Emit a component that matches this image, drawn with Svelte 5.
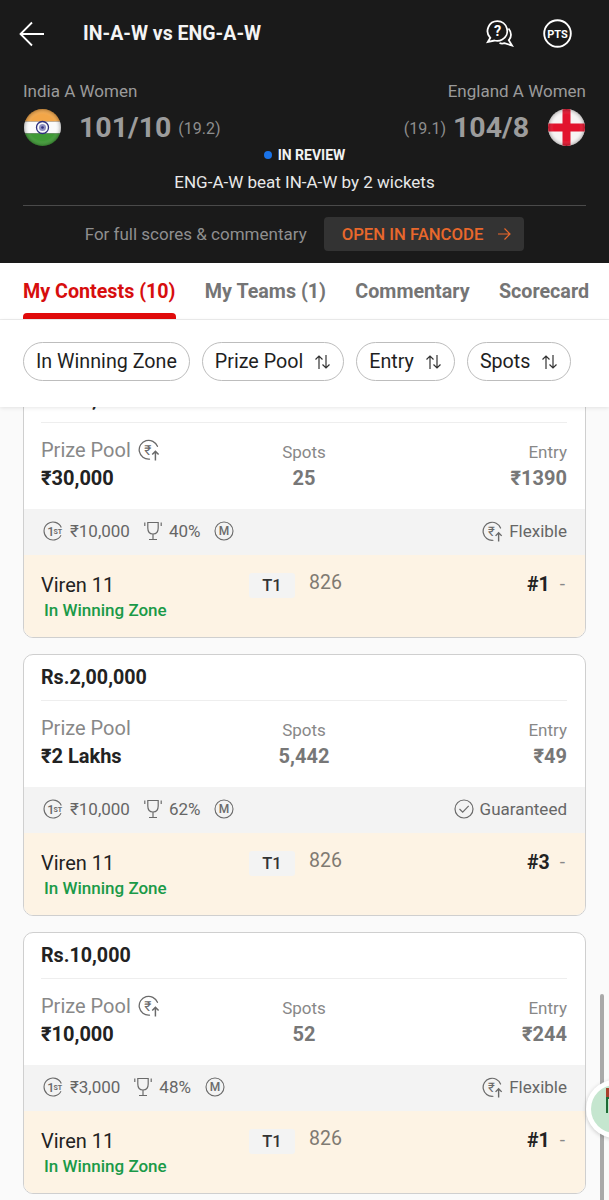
<script>
  const contests = [
    { title: 'Rs.30,000', pool: '₹30,000', flexible: true, spots: '25', entry: '₹1390', first: '₹10,000', win: '40%', type: 'Flexible', rank: '#1' },
    { title: 'Rs.2,00,000', pool: '₹2 Lakhs', flexible: false, spots: '5,442', entry: '₹49', first: '₹10,000', win: '62%', type: 'Guaranteed', rank: '#3' },
    { title: 'Rs.10,000', pool: '₹10,000', flexible: true, spots: '52', entry: '₹244', first: '₹3,000', win: '48%', type: 'Flexible', rank: '#1' }
  ];
  const filters = [
    { label: 'In Winning Zone', sort: false },
    { label: 'Prize Pool', sort: true },
    { label: 'Entry', sort: true },
    { label: 'Spots', sort: true }
  ];
</script>

{#snippet flexIcon(size)}
  <svg class="ico" width={size} height={size} viewBox="0 0 24 24" fill="none" stroke="#6a6a6a" stroke-width="1.400">
    <path d="M21.200 8A10.300 10.300 0 1 0 12.500 22" stroke-linecap="round" />
    <text x="10.800" y="17" text-anchor="middle" class="flex-rupee">₹</text>
    <path d="M19 23.500V13.500M15.500 17 19 13.500l3.500 3.500" stroke-width="1.600" />
  </svg>
{/snippet}

{#snippet sortIcon()}
  <svg class="sort" width="17" height="16" viewBox="0 0 17 16" fill="none" stroke="#333" stroke-width="1.200">
    <path d="M5 15V2M1.500 5.500 5 2l3.500 3.500M12 1v13M8.500 10.500 12 14l3.500-3.500" />
  </svg>
{/snippet}

<div class="screen">
  <header class="match">
    <div class="topbar">
      <svg class="back" width="26" height="26" viewBox="0 0 26 26" fill="none" stroke="#fff" stroke-width="1.800">
        <path d="M25 13H2M13 1.500 1.500 13 13 24.500" />
      </svg>
      <h1>IN-A-W vs ENG-A-W</h1>
      <svg class="help" width="28" height="27" viewBox="0 0 28 27" fill="none" stroke="#fff" stroke-width="1.800">
        <path d="M11.500 1.200a9.800 9.800 0 0 1 4.800 18.300c-2.300 1.300-5.200 1.700-7.800 1L1.800 22l2.500-4.200A9.800 9.800 0 0 1 11.500 1.200Z" />
        <path d="M22.500 8.500c3.300 3.800 3.200 8.700.3 11.700l3.200 5.300-7.500-2.300c-2 .6-3.500.5-5-.2" />
        <text x="11.500" y="16" text-anchor="middle" class="help-q">?</text>
      </svg>
      <svg class="pts" width="29" height="29" viewBox="0 0 29 29" fill="none">
        <circle cx="14.500" cy="14.500" r="13.300" stroke="#fff" stroke-width="1.900" />
        <text x="14.500" y="18.500" text-anchor="middle" class="pts-text">PTS</text>
      </svg>
    </div>

    <div class="names">
      <span>India A Women</span>
      <span>England A Women</span>
    </div>

    <div class="scores">
      <svg class="flag" width="37" height="37" viewBox="0 0 37 37">
        <defs>
          <clipPath id="ball"><circle cx="18.500" cy="18.500" r="18.500" /></clipPath>
          <radialGradient id="gloss" cx="50%" cy="50%" r="50%">
            <stop offset="70%" stop-color="#fff" stop-opacity="0" />
            <stop offset="100%" stop-color="#000" stop-opacity="0.250" />
          </radialGradient>
        </defs>
        <g clip-path="url(#ball)">
          <rect width="37" height="12.500" fill="#f2a648" />
          <rect y="12.500" width="37" height="12" fill="#fafafa" />
          <rect y="24.500" width="37" height="12.500" fill="#3f9a36" />
          <circle cx="18.500" cy="18.500" r="6" fill="none" stroke="#2f2f7c" stroke-width="1.300" />
          <circle cx="18.500" cy="18.500" r="3.500" fill="#8f8fc0" />
          <circle cx="18.500" cy="18.500" r="1.300" fill="#2f2f7c" />
          <circle cx="18.500" cy="18.500" r="18.500" fill="url(#gloss)" />
        </g>
      </svg>
      <strong class="runs home">101/10</strong>
      <span class="overs">(19.2)</span>
      <span class="spacer"></span>
      <span class="overs">(19.1)</span>
      <strong class="runs away">104/8</strong>
      <svg class="flag eng" width="37" height="37" viewBox="0 0 37 37">
        <g clip-path="url(#ball)">
          <rect width="37" height="37" fill="#f7f4f4" />
          <rect x="14.500" width="8" height="37" fill="#e2132d" />
          <rect y="14.500" width="37" height="8" fill="#e2132d" />
          <circle cx="18.500" cy="18.500" r="18.500" fill="url(#gloss)" />
        </g>
      </svg>
    </div>

    <div class="status"><i></i>IN REVIEW</div>
    <p class="result">ENG-A-W beat IN-A-W by 2 wickets</p>

    <div class="promo">
      <span>For full scores &amp; commentary</span>
      <button type="button">
        OPEN IN FANCODE
        <svg width="13" height="14" viewBox="0 0 13 14" fill="none" stroke="#e9682c" stroke-width="1.200">
          <path d="M0 7h12M6.500 1.500 12 7l-5.500 5.500" />
        </svg>
      </button>
    </div>
  </header>

  <nav class="tabs">
    <span class="tab active">My Contests (10)</span>
    <span class="tab">My Teams (1)</span>
    <span class="tab">Commentary</span>
    <span class="tab">Scorecard</span>
  </nav>

  <div class="filters">
    {#each filters as f}
      <span class="pill">
        {f.label}
        {#if f.sort}{@render sortIcon()}{/if}
      </span>
    {/each}
  </div>

  <main class="list">
    <div class="scroll">
      {#each contests as c}
        <article class="card">
          <div class="title">{c.title}</div>
          <div class="info">
            <div class="col">
              <span class="pool-label">Prize Pool {#if c.flexible}{@render flexIcon(22)}{/if}</span>
              <strong class="pool">{c.pool}</strong>
            </div>
            <div class="col mid">
              <span>Spots</span>
              <strong>{c.spots}</strong>
            </div>
            <div class="col end">
              <span>Entry</span>
              <strong>{c.entry}</strong>
            </div>
          </div>
          <div class="strip">
            <svg class="ico" width="20" height="20" viewBox="0 0 20 20" fill="none" stroke="#6a6a6a" stroke-width="1.100">
              <path d="M18.300 6.500A9 9 0 1 0 18 14.200" />
              <text x="7.800" y="14.500" text-anchor="middle" class="medal-one">1</text>
              <text x="14.800" y="12.500" text-anchor="middle" class="medal-st">ST</text>
            </svg>
            <span class="first">{c.first}</span>
            <svg class="ico cup" width="18" height="20" viewBox="0 0 18 20" fill="none" stroke="#6a6a6a" stroke-width="1.200">
              <path d="M3.800 1.500h10.400v5.500c0 3.800-2.200 6-5.200 6s-5.200-2.200-5.200-6V1.500ZM9 13v5.500M5 18.500h8M.8 1.500v3.500M17.200 1.500v3.500" />
            </svg>
            <span class="win">{c.win}</span>
            <svg class="ico" width="20" height="20" viewBox="0 0 20 20" fill="none" stroke="#6a6a6a" stroke-width="1.100">
              <circle cx="10" cy="10" r="9" />
              <text x="10" y="14.300" text-anchor="middle" class="medal-m">M</text>
            </svg>
            <span class="spacer"></span>
            {#if c.flexible}
              {@render flexIcon(21)}
            {:else}
              <svg class="ico" width="20" height="20" viewBox="0 0 20 20" fill="none" stroke="#6a6a6a" stroke-width="1.200">
                <circle cx="10" cy="10" r="9" />
                <path d="m5.500 10 3.200 3.200 6-6.400" />
              </svg>
            {/if}
            <span class="type">{c.type}</span>
          </div>
          <div class="team">
            <div class="team-left">
              <span class="team-name">Viren 11</span>
              <span class="zone">In Winning Zone</span>
            </div>
            <span class="badge">T1</span>
            <span class="points">826</span>
            <span class="spacer"></span>
            <strong class="rank">{c.rank}</strong>
            <span class="dash">-</span>
          </div>
        </article>
      {/each}
    </div>
    <div class="scrollbar"></div>
    <div class="fab">
      <span></span>
    </div>
  </main>
</div>

<style>
  :global(body) {
    background: #fafafa;
  }

  .screen {
    width: 609px;
    height: 1200px;
    overflow: hidden;
    display: flex;
    flex-direction: column;
    font-family: Roboto, 'Liberation Sans', sans-serif;
  }

  .match {
    height: 263px;
    box-sizing: border-box;
    padding: 0 23px;
    flex-shrink: 0;
    background: #1a1a1a;
    color: #fff;
  }

  .topbar {
    height: 67px;
    display: flex;
    align-items: center;
  }

  .back {
    margin-left: -4px;
  }

  h1 {
    margin: 0 0 0 38px;
    font-size: 19.500px;
    font-weight: 700;
    flex: 1;
    color: #f4f4f4;
  }

  .help-q {
    font: 700 14.500px Roboto, sans-serif;
    fill: #fff;
    stroke: none;
  }

  .pts {
    margin: 0 14px 0 29px;
  }

  .pts-text {
    font: 700 11px Roboto, sans-serif;
    fill: #fff;
  }

  .names {
    display: flex;
    justify-content: space-between;
    margin-top: 14px;
    font-size: 17px;
    line-height: 20px;
    color: #9a9a9a;
  }

  .scores {
    display: flex;
    align-items: center;
    margin: 8px 0 0 1px;
    height: 37px;
  }

  .runs {
    font-size: 28.500px;
    font-weight: 700;
    color: #9c9c9c;
  }

  .home {
    margin: 0 7px 0 18px;
  }

  .away {
    margin: 0 19px 0 7px;
  }

  .overs {
    font-size: 16px;
    color: #8e8e8e;
    padding-top: 2px;
  }

  .spacer {
    flex: 1;
  }

  .eng {
    margin-right: 1px;
  }

  .status {
    display: flex;
    align-items: center;
    justify-content: center;
    gap: 6px;
    margin-top: 1px;
    height: 16px;
    font-size: 14px;
    font-weight: 700;
    color: #f2f2f2;
  }

  .status i {
    width: 8px;
    height: 8px;
    border-radius: 50%;
    background: #1a73e8;
  }

  .result {
    margin: 9px 0 0;
    font-size: 17px;
    line-height: 20px;
    text-align: center;
    color: #e8e8e8;
    padding-bottom: 13px;
    border-bottom: 1px solid #4a4a4a;
  }

  .promo {
    display: flex;
    align-items: center;
    justify-content: center;
    gap: 17px;
    margin-top: 11px;
    font-size: 17px;
    color: #8f8f8f;
  }

  .promo button {
    display: flex;
    align-items: center;
    gap: 15px;
    height: 34px;
    padding: 0 13px 0 18px;
    border: 0;
    border-radius: 4px;
    background: #333;
    color: #e9682c;
    font: 500 16.700px Roboto, sans-serif;
  }

  .tabs {
    height: 57px;
    flex-shrink: 0;
    box-sizing: border-box;
    display: flex;
    justify-content: space-between;
    padding: 0 20px 0 23px;
    background: #fff;
    border-bottom: 1px solid #eee;
  }

  .tab {
    position: relative;
    padding-top: 17px;
    font-size: 19.700px;
    font-weight: 700;
    color: #757575;
  }

  .tab.active {
    color: #d70e0e;
  }

  .tab.active::after {
    content: '';
    position: absolute;
    left: 0;
    right: 0;
    bottom: 0;
    height: 6px;
    border-radius: 4px 4px 0 0;
    background: #e00b0b;
  }

  .filters {
    height: 87px;
    flex-shrink: 0;
    box-sizing: border-box;
    display: flex;
    gap: 12px;
    padding: 22px 23px 0;
    background: #fff;
    box-shadow: 0 1px 4px rgb(0 0 0 / 0.1);
    position: relative;
    z-index: 1;
  }

  .pill {
    height: 39px;
    box-sizing: border-box;
    display: flex;
    align-items: center;
    gap: 11px;
    padding: 0 12px;
    border: 1px solid #bdbdbd;
    border-radius: 20px;
    font-size: 19.700px;
    color: #1f1f1f;
  }

  .list {
    position: relative;
    flex: 1;
    overflow: hidden;
    background: #fafafa;
  }

  .scroll {
    display: flex;
    flex-direction: column;
    gap: 16px;
    margin-top: -31px;
    padding: 0 23px;
  }

  .card {
    border: 1px solid #cfcfcf;
    border-radius: 10px;
    overflow: hidden;
    background: #fff;
  }

  .title {
    height: 45px;
    margin: 0 18px 0 17px;
    display: flex;
    align-items: center;
    font-size: 19.700px;
    font-weight: 700;
    color: #222;
    border-bottom: 1px solid #eee;
  }

  .info {
    height: 86px;
    box-sizing: border-box;
    display: grid;
    grid-template-columns: 1fr 1fr 1fr;
    padding: 12px 18px 0 17px;
  }

  .col {
    display: flex;
    flex-direction: column;
    font-size: 17px;
    color: #888;
  }

  .col span {
    height: 30px;
    display: flex;
    align-items: center;
    padding-top: 3px;
    box-sizing: border-box;
  }

  .col strong {
    font-size: 20px;
    line-height: 26px;
    color: #777;
  }

  .col.mid {
    align-items: center;
  }

  .col.end {
    align-items: flex-end;
  }

  .col .pool-label {
    font-size: 20px;
    gap: 7px;
    padding-top: 0;
  }

  .col .pool {
    color: #222;
  }

  .strip {
    height: 46px;
    box-sizing: border-box;
    display: flex;
    align-items: center;
    padding: 0 18px 2px 19px;
    background: #f3f3f3;
    font-size: 17px;
    color: #666;
  }

  .ico {
    flex-shrink: 0;
  }

  .first {
    margin: 0 14px 0 7px;
  }

  .win {
    margin: 0 14px 0 7px;
  }

  .type {
    margin-left: 6px;
  }

  .flex-rupee {
    font: 400 15px Roboto, 'DejaVu Sans', sans-serif;
    fill: #6a6a6a;
    stroke: none;
  }

  .medal-one {
    font: 500 12.500px Roboto, sans-serif;
    fill: #6a6a6a;
    stroke: none;
  }

  .medal-st {
    font: 700 7px Roboto, sans-serif;
    fill: #6a6a6a;
    stroke: none;
  }

  .medal-m {
    font: 500 12px Roboto, sans-serif;
    fill: #6a6a6a;
    stroke: none;
  }

  .team {
    height: 82px;
    box-sizing: border-box;
    display: flex;
    align-items: flex-start;
    padding: 18px 20px 0 17px;
    background: #fdf3e4;
  }

  .team-left {
    width: 208px;
    display: flex;
    flex-direction: column;
  }

  .team-name {
    font-size: 20px;
    line-height: 24px;
    color: #222;
  }

  .zone {
    margin: 3px 0 0 3px;
    font-size: 17px;
    font-weight: 500;
    line-height: 20px;
    color: #1a9a48;
  }

  .badge {
    width: 46px;
    height: 25px;
    display: flex;
    align-items: center;
    justify-content: center;
    border-radius: 3px;
    background: #f3f3f3;
    font-size: 16.500px;
    font-weight: 500;
    color: #333;
  }

  .points {
    margin-left: 14px;
    font-size: 19.500px;
    line-height: 20px;
    color: #7f7a72;
  }

  .rank {
    font-size: 19.500px;
    line-height: 24px;
    color: #222;
  }

  .dash {
    margin-left: 10px;
    font-size: 19px;
    line-height: 22px;
    color: #888;
  }

  .scrollbar {
    position: absolute;
    left: 600px;
    top: 587px;
    bottom: 0;
    width: 4px;
    border-radius: 2px 2px 0 0;
    background: #a9a9a9;
  }

  .fab {
    position: absolute;
    left: 586px;
    top: 673px;
    width: 58px;
    height: 58px;
    box-sizing: border-box;
    padding: 5px;
    border-radius: 50%;
    background: #fff;
    box-shadow: 0 1px 4px rgb(0 0 0 / 0.2);
  }

  .fab span {
    display: block;
    width: 100%;
    height: 100%;
    border-radius: 50%;
    background: #c5e6cf;
    position: relative;
  }

  .fab span::before {
    content: '';
    position: absolute;
    left: 15px;
    top: 12px;
    width: 8px;
    height: 14px;
    border: solid #1d6b35;
    border-width: 2px 0 0 2px;
  }

  .fab span::after {
    content: '';
    position: absolute;
    left: 15px;
    top: 3px;
    width: 6px;
    height: 9px;
    background: #a8412c;
  }
</style>
